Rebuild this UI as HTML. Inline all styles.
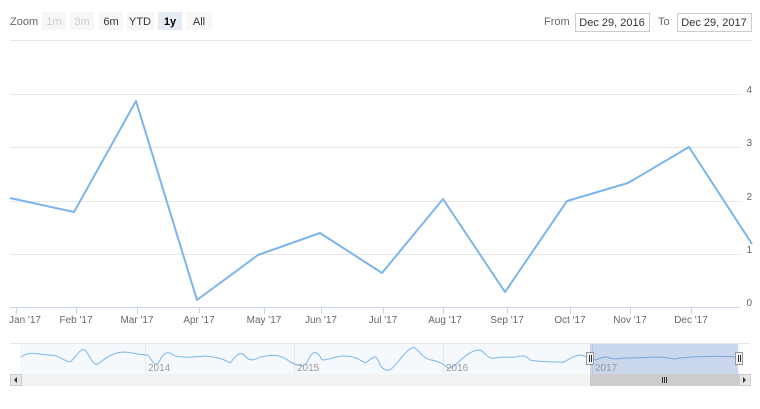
<!DOCTYPE html>
<html><head><style>
body{margin:0;background:#fff;font-family:"Liberation Sans",sans-serif;}
</style></head><body>
<svg width="760" height="404" xmlns="http://www.w3.org/2000/svg" font-family="Liberation Sans, sans-serif">
<rect width="760" height="404" fill="#fff"/>
<!-- range selector -->
<text x="10" y="25" font-size="11" fill="#666">Zoom</text>
<rect x="42" y="12" width="24" height="18" fill="#f7f7f7"/><text x="54" y="25" font-size="11" fill="#ccc" text-anchor="middle">1m</text>
<rect x="70" y="12" width="24" height="18" fill="#f7f7f7"/><text x="82" y="25" font-size="11" fill="#ccc" text-anchor="middle">3m</text>
<rect x="99" y="12" width="24" height="18" fill="#f7f7f7"/><text x="111" y="25" font-size="11" fill="#333" text-anchor="middle">6m</text>
<rect x="127" y="12" width="27" height="18" fill="#f7f7f7"/><text x="140" y="25" font-size="11" fill="#333" text-anchor="middle">YTD</text>
<rect x="158" y="12" width="24" height="18" fill="#e6ebf5"/><text x="170" y="25" font-size="11" fill="#000" font-weight="bold" text-anchor="middle">1y</text>
<rect x="186" y="12" width="26" height="18" fill="#f7f7f7"/><text x="199" y="25" font-size="11" fill="#333" text-anchor="middle">All</text>
<text x="544" y="25" font-size="11" fill="#666">From</text>
<rect x="575.5" y="13.5" width="74" height="18" fill="#fff" stroke="#ccc"/><text x="612" y="26" font-size="11" fill="#333" text-anchor="middle">Dec 29, 2016</text>
<text x="658" y="25" font-size="11" fill="#666">To</text>
<rect x="677.5" y="13.5" width="74" height="18" fill="#fff" stroke="#ccc"/><text x="714" y="26" font-size="11" fill="#333" text-anchor="middle">Dec 29, 2017</text>
<line x1="10" y1="40.5" x2="752" y2="40.5" stroke="#e6e6e6"/>
<!-- grid -->
<g stroke="#e6e6e6">
<line x1="10" y1="94.5" x2="740" y2="94.5"/><line x1="10" y1="147.5" x2="740" y2="147.5"/>
<line x1="10" y1="201.5" x2="740" y2="201.5"/><line x1="10" y1="254.5" x2="740" y2="254.5"/>
</g>
<line x1="10" y1="307.5" x2="740" y2="307.5" stroke="#ccd6eb"/>
<g font-size="10" fill="#666" text-anchor="end">
<text x="752" y="93">4</text><text x="752" y="146">3</text><text x="752" y="200">2</text><text x="752" y="253">1</text><text x="752" y="306">0</text>
</g>
<g stroke="#ccd6eb">
<line x1="16.5" y1="308" x2="16.5" y2="314"/><line x1="76.5" y1="308" x2="76.5" y2="314"/><line x1="137.5" y1="308" x2="137.5" y2="314"/><line x1="199.5" y1="308" x2="199.5" y2="314"/><line x1="264.5" y1="308" x2="264.5" y2="314"/><line x1="321.5" y1="308" x2="321.5" y2="314"/><line x1="383.5" y1="308" x2="383.5" y2="314"/><line x1="443.5" y1="308" x2="443.5" y2="314"/><line x1="507.5" y1="308" x2="507.5" y2="314"/><line x1="570.5" y1="308" x2="570.5" y2="314"/><line x1="630.5" y1="308" x2="630.5" y2="314"/><line x1="691.5" y1="308" x2="691.5" y2="314"/>
</g>
<g font-size="10" fill="#666" text-anchor="middle">
<text x="25" y="323">Jan '17</text><text x="76" y="323">Feb '17</text><text x="137" y="323">Mar '17</text><text x="199" y="323">Apr '17</text><text x="264" y="323">May '17</text><text x="321" y="323">Jun '17</text><text x="383" y="323">Jul '17</text><text x="445" y="323">Aug '17</text><text x="507" y="323">Sep '17</text><text x="570" y="323">Oct '17</text><text x="630" y="323">Nov '17</text><text x="691" y="323">Dec '17</text>
</g>
<polyline fill="none" stroke="#7cb5ec" stroke-width="2" stroke-linejoin="round" points="10,198 74,212 136,101 197,300 258,255 320,233 382,273 443,199 505,292 567,201 628,183 689,147 752,244"/>
<!-- navigator -->
<line x1="10" y1="343.5" x2="750" y2="343.5" stroke="#e6e6e6"/>
<rect x="20" y="344" width="720" height="30" fill="#f5f9fd"/>
<g stroke="#e6e6e6"><line x1="145.5" y1="344" x2="145.5" y2="374"/><line x1="294.5" y1="344" x2="294.5" y2="374"/><line x1="443.5" y1="344" x2="443.5" y2="374"/><line x1="592.5" y1="344" x2="592.5" y2="374"/></g>
<path fill="none" stroke="#7cb5ec" stroke-width="1" d="M21,357 C30,350 40,355 50,355 C58,355 62,360 70,362 C76,358 80,347 85,350 C90,355 92,366 98,364 C108,356 115,352 125,352 C135,353 140,355 148,355 C152,360 155,370 160,360 C165,350 170,352 175,356 C185,358 195,357 205,356 C215,357 222,358 230,363 C236,356 240,350 245,356 C250,362 255,360 260,357 C270,355 280,353 290,362 C300,366 305,370 310,356 C315,350 318,352 322,360 C330,360 335,356 345,356 C355,356 360,360 365,363 C372,360 375,350 380,365 C385,372 390,372 395,365 C400,360 410,345 415,348 C420,352 425,360 432,360 C440,362 445,365 448,368 C455,370 465,350 480,350 C485,352 488,360 495,358 C505,356 510,358 515,357 C520,356 525,354 530,360 C540,362 550,362 560,362 C565,364 570,356 580,355 C585,356 588,357 595,360 C600,358 605,356 610,358 C615,360 620,358 630,358 C640,358 650,357 660,357 C670,358 675,360 680,358 C700,356 720,356 738,357"/>
<rect x="590" y="344" width="148" height="30" fill="#6685c2" fill-opacity="0.3"/>
<rect x="586.5" y="352.5" width="7" height="12" fill="#f2f2f2" stroke="#999"/><line x1="589.5" y1="355" x2="589.5" y2="362" stroke="#333"/><line x1="591.5" y1="355" x2="591.5" y2="362" stroke="#333"/>
<rect x="735.5" y="352.5" width="7" height="12" fill="#f2f2f2" stroke="#999"/><line x1="738.5" y1="355" x2="738.5" y2="362" stroke="#333"/><line x1="740.5" y1="355" x2="740.5" y2="362" stroke="#333"/>
<g font-size="10" fill="#999"><text x="148" y="371">2014</text><text x="297" y="371">2015</text><text x="446" y="371">2016</text><text x="595" y="371">2017</text></g>
<!-- scrollbar -->
<rect x="10" y="374" width="740" height="12" fill="#f2f2f2"/>
<rect x="590" y="374" width="149" height="12" fill="#ccc"/>
<g stroke="#333"><line x1="662.5" y1="377" x2="662.5" y2="383"/><line x1="664.5" y1="377" x2="664.5" y2="383"/><line x1="666.5" y1="377" x2="666.5" y2="383"/></g>
<rect x="10.5" y="374.5" width="11" height="11" fill="#e6e6e6" stroke="#ccc"/><path d="M17,377 L14,380 L17,383 Z" fill="#333"/>
<rect x="739.5" y="374.5" width="11" height="11" fill="#e6e6e6" stroke="#ccc"/><path d="M743,377 L746,380 L743,383 Z" fill="#333"/>
</svg>
</body></html>
